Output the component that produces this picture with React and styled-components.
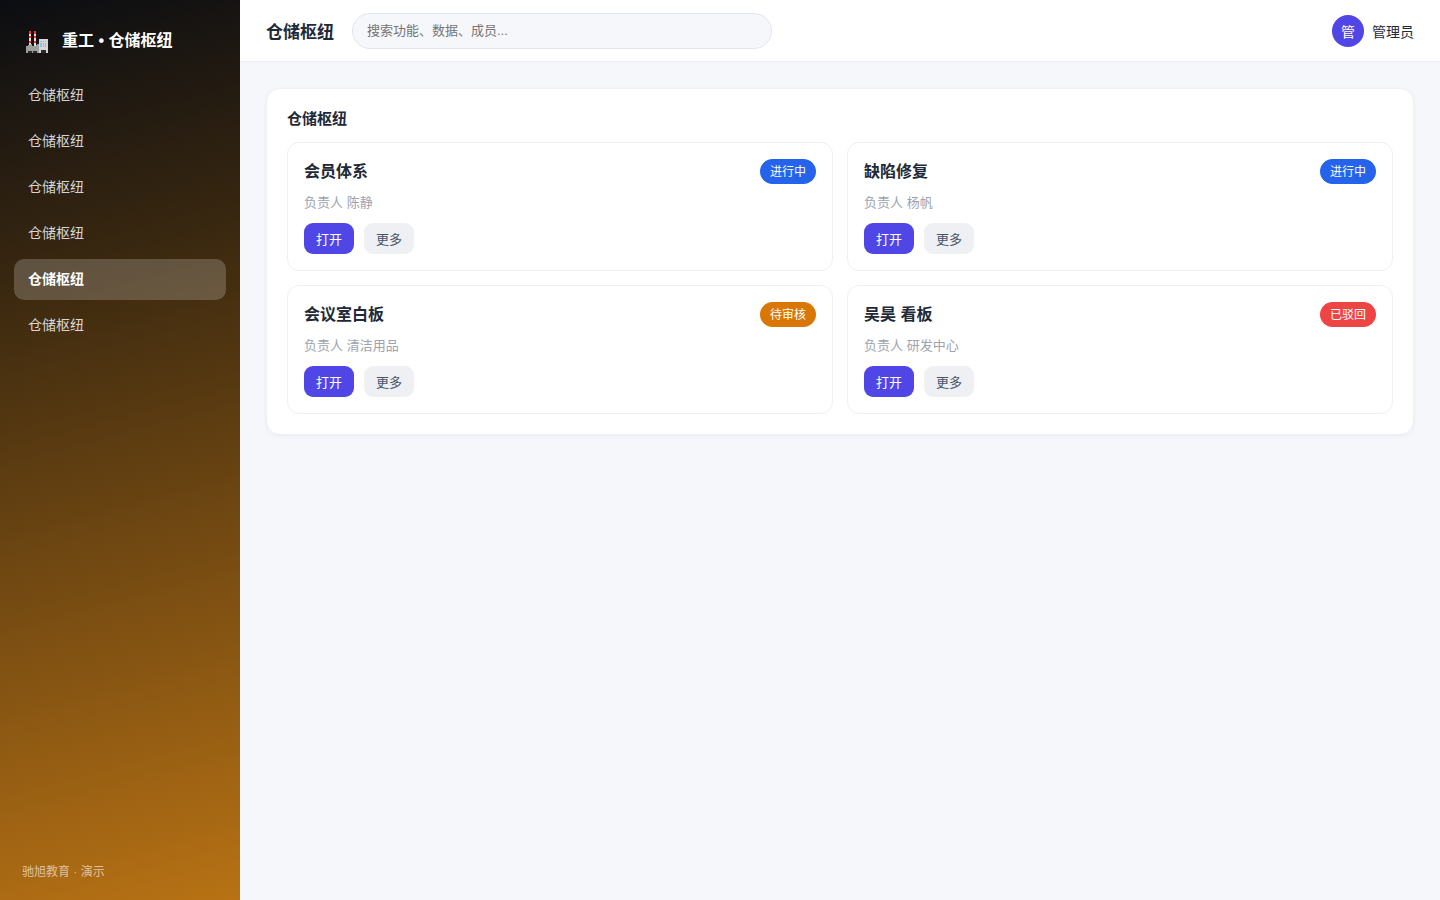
import { createGlobalStyle, styled } from "styled-components"

const navItems = [
  { id: 1, label: "仓储枢纽" },
  { id: 2, label: "仓储枢纽" },
  { id: 3, label: "仓储枢纽" },
  { id: 4, label: "仓储枢纽" },
  { id: 5, label: "仓储枢纽", active: true },
  { id: 6, label: "仓储枢纽" },
]

const cards = [
  { title: "会员体系", owner: "陈静", status: "进行中", color: "#2563eb" },
  { title: "缺陷修复", owner: "杨帆", status: "进行中", color: "#2563eb" },
  { title: "会议室白板", owner: "清洁用品", status: "待审核", color: "#d97706" },
  { title: "吴昊 看板", owner: "研发中心", status: "已驳回", color: "#ef4444" },
]

const FactoryIcon = () => (
  <svg width="22" height="22" viewBox="0 0 22 22" shapeRendering="crispEdges">
    <path fill="#e0e0e0" d="M3 0h2v15H3zM8 0h2v15H8z" />
    <path
      fill="#f03535"
      d="M3 0h2v3H3zM3 5h2v2H3zM3 10h2v2H3zM8 0h2v3H8zM8 5h2v2H8zM8 10h2v2H8z"
    />
    <path fill="#9e9e9e" d="M0 15h2v-1h2v-1h2v2h4v-1h1v-1h2v9H0z" />
    <path fill="#d6d6d6" d="M13 8h9v14h-9z" />
    <path
      fill="#82c4f5"
      d="M14 10h2v1h-2zM17 10h1v1h-1zM19 10h1v1h-1zM14 12h2v4h-2zM17 12h1v4h-1zM19 12h1v4h-1z"
    />
    <path fill="#2b2b2b" d="M2 20h4v2H2zM7 20h4v2H7zM15 19h5v3h-5z" />
  </svg>
)

export default function App() {
  return (
    <Layout lang="zh-CN">
      <GlobalStyle />
      <Sidebar>
        <Brand>
          <FactoryIcon />
          <span>重工 • 仓储枢纽</span>
        </Brand>
        <Nav>
          {navItems.map((item) => (
            <NavLink key={item.id} href="#" $active={item.active}>
              {item.label}
            </NavLink>
          ))}
        </Nav>
        <SidebarFooter>驰旭教育 · 演示</SidebarFooter>
      </Sidebar>
      <Content>
        <Topbar>
          <PageTitle>仓储枢纽</PageTitle>
          <SearchInput
            type="search"
            aria-label="搜索"
            placeholder="搜索功能、数据、成员..."
          />
          <User>
            <Avatar>管</Avatar>
            <span>管理员</span>
          </User>
        </Topbar>
        <Main>
          <Panel>
            <PanelTitle>仓储枢纽</PanelTitle>
            <CardGrid>
              {cards.map((card) => (
                <Card key={card.title}>
                  <CardHead>
                    <CardTitle>{card.title}</CardTitle>
                    <Badge $color={card.color}>{card.status}</Badge>
                  </CardHead>
                  <Owner>负责人 {card.owner}</Owner>
                  <Actions>
                    <Button $primary>打开</Button>
                    <Button>更多</Button>
                  </Actions>
                </Card>
              ))}
            </CardGrid>
          </Panel>
        </Main>
      </Content>
    </Layout>
  )
}

const GlobalStyle = createGlobalStyle`
  * {
    box-sizing: border-box;
  }

  body {
    margin: 0;
    background: #f5f7fb;
    color: #1f2937;
    font-size: 14px;
  }

  body, button, input {
    font-family: "Liberation Sans", "Noto Sans CJK SC", sans-serif;
  }
`

const Layout = styled.div`
  display: flex;
  min-height: 100vh;
`

const Sidebar = styled.aside`
  display: flex;
  flex-direction: column;
  flex-shrink: 0;
  width: 240px;
  padding: 18px 14px;
  color: #fff;
  background: linear-gradient(165deg, #0b0d12 0%, #3a2810 30%, #b87214 100%);
`

const Brand = styled.div`
  display: flex;
  align-items: flex-end;
  gap: 14px;
  margin-bottom: 22px;
  padding: 11px 12px 0;
  font-size: 16px;
  font-weight: 700;
  line-height: 24px;
`

const Nav = styled.nav`
  display: flex;
  flex-direction: column;
  gap: 5px;
`

const NavLink = styled.a`
  padding: 10px 14px;
  border-radius: 10px;
  font-size: 14px;
  line-height: 21px;
  text-decoration: none;
  color: ${(props) => (props.$active ? "#fff" : "rgba(255, 255, 255, 0.82)")};
  font-weight: ${(props) => (props.$active ? 700 : 400)};
  background: ${(props) =>
    props.$active ? "rgba(255, 255, 255, 0.2)" : "transparent"};
`

const SidebarFooter = styled.div`
  margin-top: auto;
  padding: 0 8px;
  font-size: 12px;
  line-height: 20px;
  color: rgba(255, 255, 255, 0.6);
`

const Content = styled.div`
  flex: 1;
  min-width: 0;
`

const Topbar = styled.header`
  display: flex;
  align-items: center;
  gap: 18px;
  height: 62px;
  padding: 0 26px;
  background: #fff;
  border-bottom: 1px solid #eceef2;
`

const PageTitle = styled.h1`
  margin: 0;
  font-size: 17px;
  font-weight: 700;
`

const SearchInput = styled.input`
  width: 420px;
  height: 36px;
  padding: 0 14px;
  border: 1px solid #e2e5ee;
  border-radius: 18px;
  background: #f5f7fb;
  font-size: 13px;
  appearance: none;
`

const User = styled.div`
  display: flex;
  align-items: center;
  gap: 8px;
  margin-left: auto;
`

const Avatar = styled.div`
  display: flex;
  align-items: center;
  justify-content: center;
  width: 32px;
  height: 32px;
  border-radius: 50%;
  background: #4f46e5;
  color: #fff;
`

const Main = styled.main`
  padding: 26px;
`

const Panel = styled.section`
  padding: 20px;
  border: 1px solid #eef0f4;
  border-radius: 14px;
  background: #fff;
  box-shadow: 0 1px 4px rgba(20, 30, 60, 0.05);
`

const PanelTitle = styled.h2`
  margin: 0 0 14px;
  font-size: 15px;
  font-weight: 700;
  line-height: 19px;
`

const CardGrid = styled.div`
  display: grid;
  grid-template-columns: repeat(2, 1fr);
  gap: 14px;
`

const Card = styled.article`
  padding: 16px;
  border: 1px solid #eeeff2;
  border-radius: 12px;
`

const CardHead = styled.div`
  display: flex;
  align-items: flex-end;
  justify-content: space-between;
`

const CardTitle = styled.h3`
  margin: 0;
  font-size: 16px;
  font-weight: 700;
  line-height: 24px;
`

const Badge = styled.span`
  padding: 1px 10px 0;
  border-radius: 13px;
  font-size: 12px;
  line-height: 24px;
  color: #fff;
  background: ${(props) => props.$color};
`

const Owner = styled.p`
  margin: 8px 0 10px;
  font-size: 13px;
  line-height: 21px;
  color: #9ca3af;
`

const Actions = styled.div`
  display: flex;
  gap: 10px;
`

const Button = styled.button`
  height: 31px;
  padding: 0 12px;
  border: none;
  border-radius: 9px;
  font-size: 13px;
  color: ${(props) => (props.$primary ? "#fff" : "#475569")};
  background: ${(props) => (props.$primary ? "#4f46e5" : "#eef0f4")};
  cursor: pointer;
`
